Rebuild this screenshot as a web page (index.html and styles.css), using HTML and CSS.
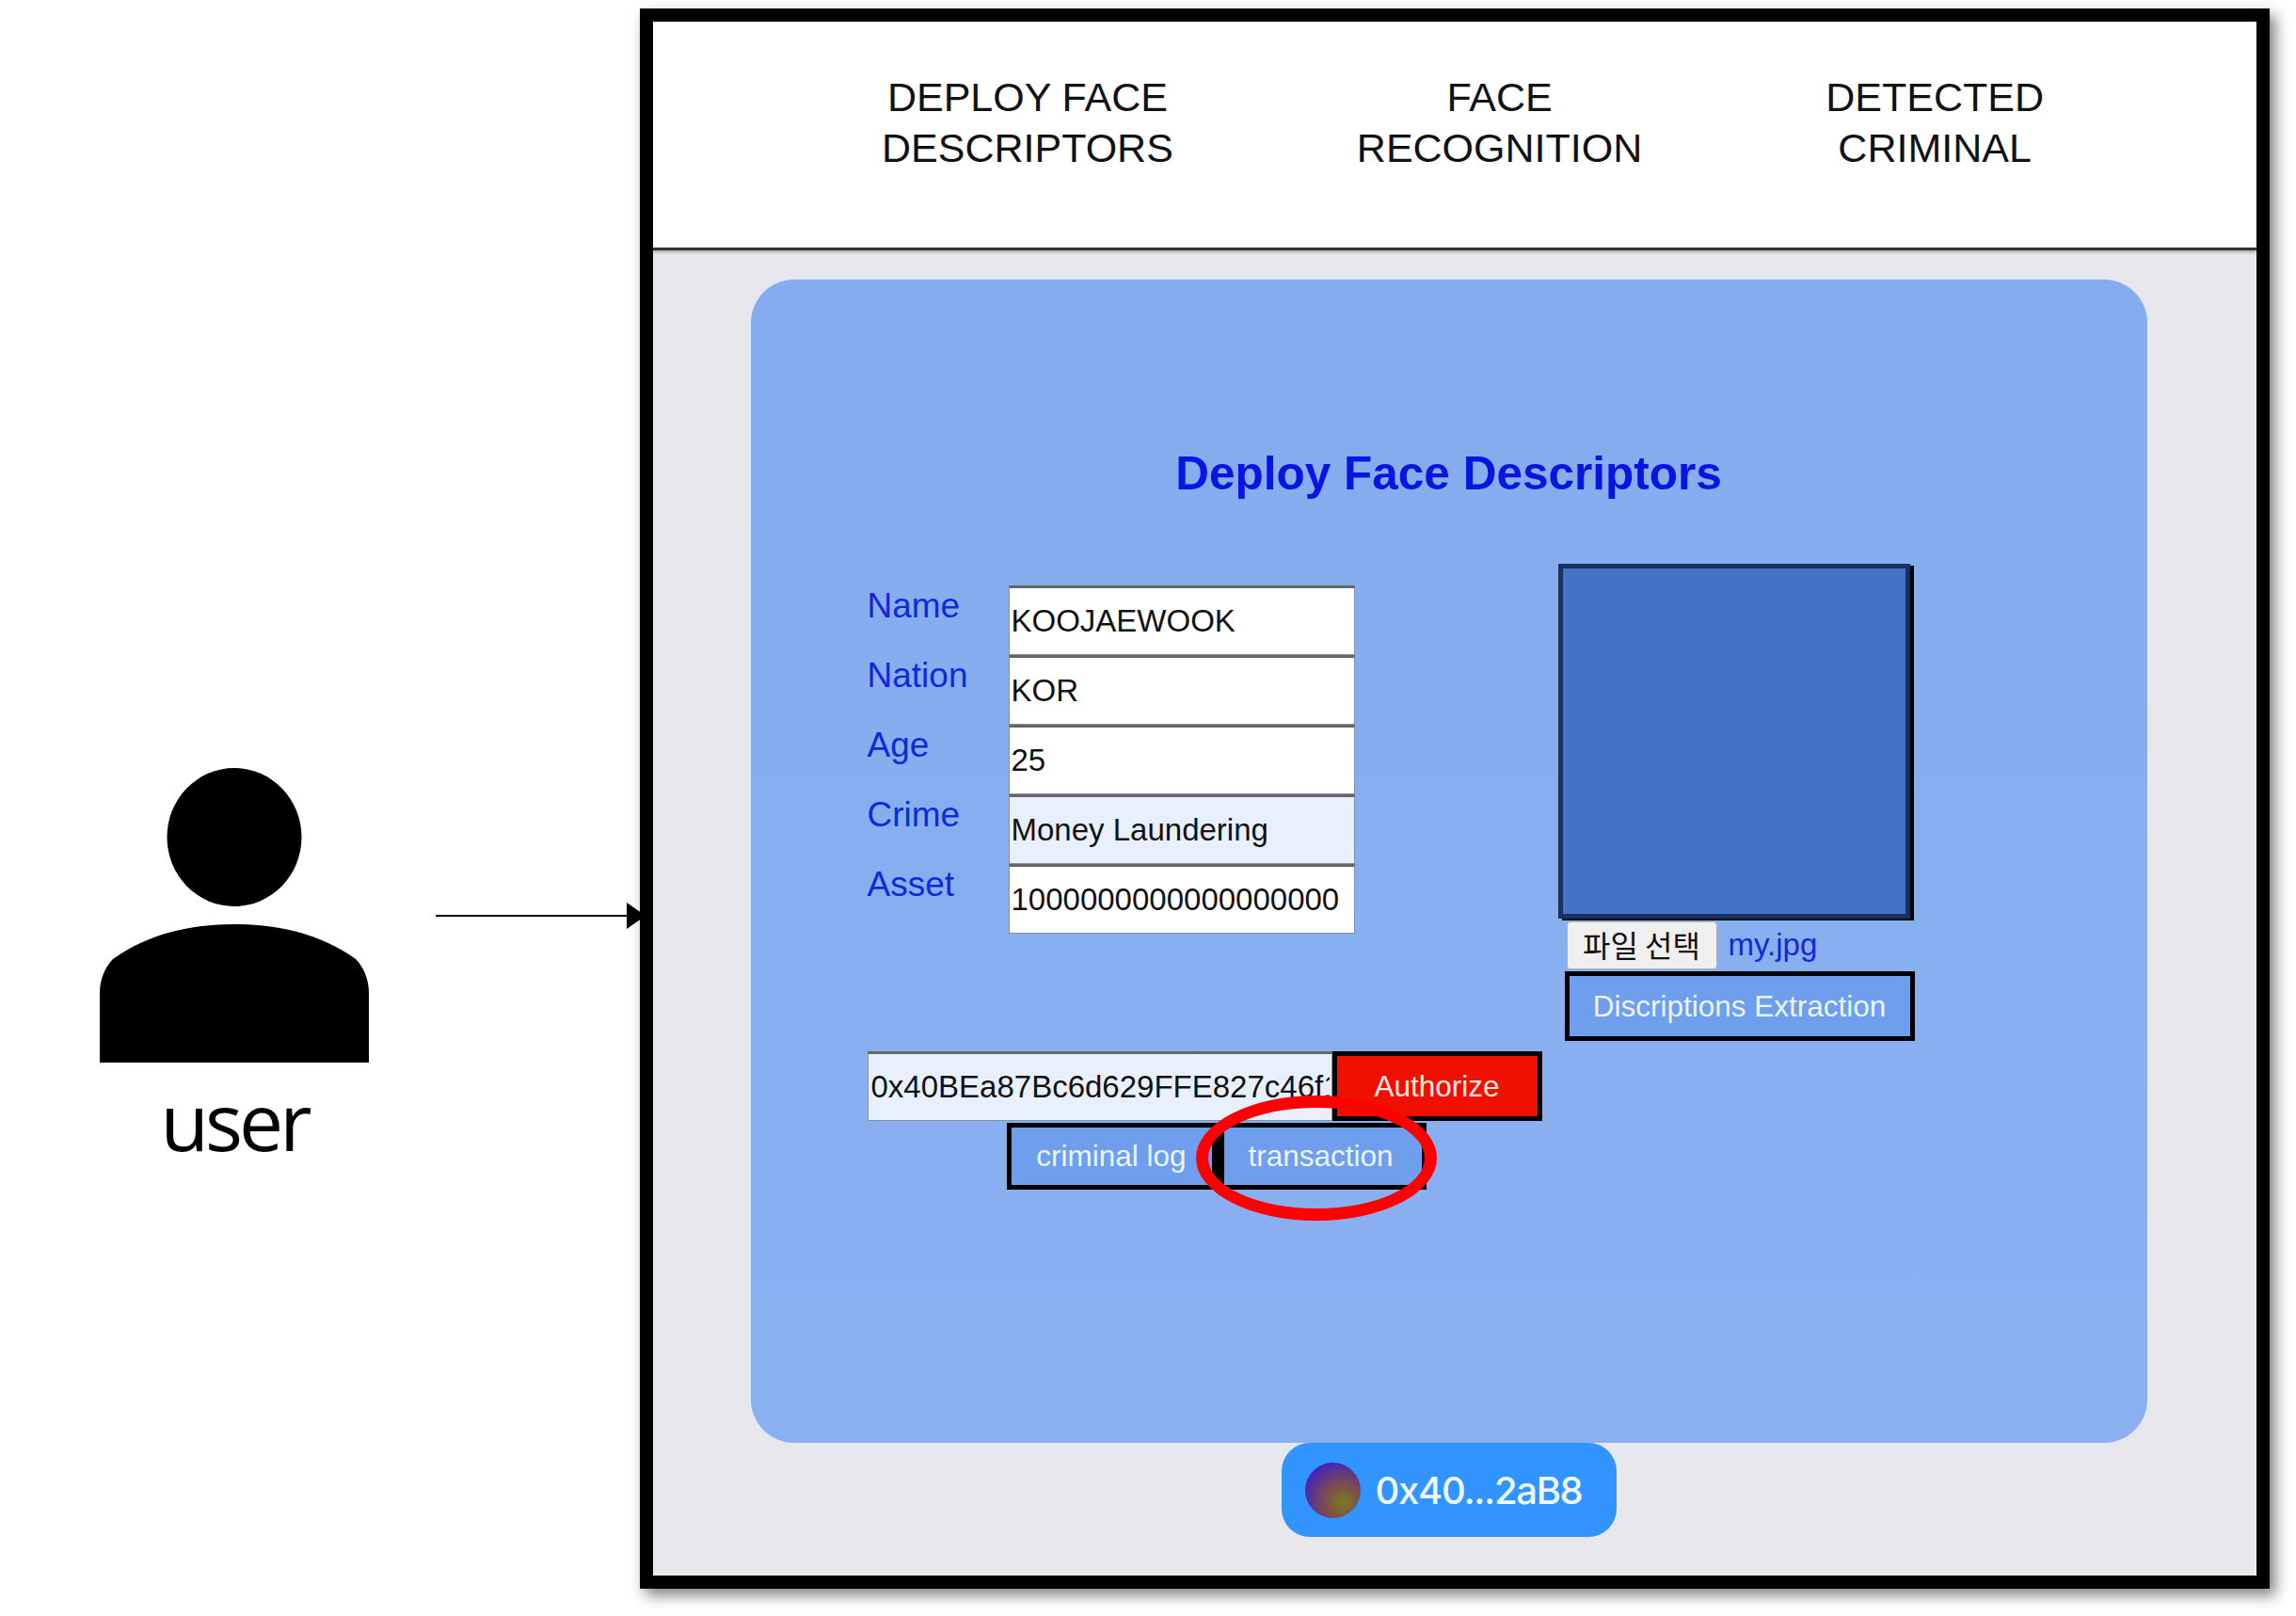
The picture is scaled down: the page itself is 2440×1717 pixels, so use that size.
FILE: index.html
```html
<!DOCTYPE html>
<html lang="en">
<head>
    <meta charset="UTF-8">
    <title>Deploy Face Descriptors</title>
    <link rel="stylesheet" href="styles.css">
</head>
<body>
    <div class="slide">
        <div class="user-node">
            <svg class="user-icon" width="286" height="313" viewBox="0 0 286 313">
                <ellipse cx="143" cy="73.5" rx="71.5" ry="73.5"/>
                <path d="M0 313V239C0 224 6 211 14 203C50 177 95 166 143 166C191 166 236 177 272 203C280 211 286 224 286 239V313Z"/>
            </svg>
            <div class="user-label">user</div>
        </div>
        <div class="arrow"></div>
        <div class="browser">
            <nav class="top-nav">
                <a class="nav-item">DEPLOY FACE<br>DESCRIPTORS</a>
                <a class="nav-item">FACE<br>RECOGNITION</a>
                <a class="nav-item">DETECTED<br>CRIMINAL</a>
            </nav>
            <main class="content">
                <section class="panel">
                    <h1 class="panel-title">Deploy Face Descriptors</h1>
                    <div class="panel-body">
                        <div class="form-side">
                            <div class="fields">
                                <div class="labels">
                                    <label>Name</label>
                                    <label>Nation</label>
                                    <label>Age</label>
                                    <label>Crime</label>
                                    <label>Asset</label>
                                </div>
                                <div class="inputs">
                                    <input class="field" type="text" value="KOOJAEWOOK">
                                    <input class="field" type="text" value="KOR">
                                    <input class="field" type="text" value="25">
                                    <input class="field autofilled" type="text" value="Money Laundering">
                                    <input class="field" type="text" value="1000000000000000000">
                                </div>
                            </div>
                            <div class="auth-row">
                                <input class="field address autofilled" type="text" value="0x40BEa87Bc6d629FFE827c46f12aB8">
                                <button class="btn btn-red">Authorize</button>
                            </div>
                            <div class="action-row">
                                <button class="btn action">criminal log</button>
                                <button class="btn action">transaction</button>
                            </div>
                        </div>
                        <div class="photo-side">
                            <div class="photo"></div>
                            <div class="file-row">
                                <button class="file-btn">파일 선택</button>
                                <span class="file-name">my.jpg</span>
                            </div>
                            <button class="btn extract">Discriptions Extraction</button>
                        </div>
                    </div>
                </section>
                <div class="wallet">
                    <span class="wallet-avatar"></span>
                    <span>0x40...2aB8</span>
                </div>
            </main>
        </div>
        <div class="highlight"></div>
    </div>
</body>
</html>
```

FILE: styles.css
```css
body {
    margin: 0;
    background-color: #fff;
    font-family: "Liberation Sans", Arial, sans-serif;
}
.slide {
    position: relative;
    width: 2440px;
    height: 1717px;
    display: flex;
    align-items: flex-start;
    overflow: hidden;
}

/* left side of the diagram */
.user-node {
    width: 286px;
    margin: 816px 0 0 106px;
    display: flex;
    flex-direction: column;
    align-items: center;
}
.user-icon {
    display: block;
    fill: #000;
}
.user-label {
    margin-top: 7px;
    font-family: "Open Sans", sans-serif;
    font-size: 84px;
    font-weight: 400;
    line-height: 110px;
    letter-spacing: -4px;
    color: #000;
}
.arrow {
    position: relative;
    width: 217px;
    height: 2px;
    margin: 972px 0 0 71px;
    background-color: #000;
}
.arrow::after {
    content: "";
    position: absolute;
    right: -6px;
    top: -13px;
    border-left: 20px solid #000;
    border-top: 14px solid transparent;
    border-bottom: 14px solid transparent;
}

/* browser window */
.browser {
    box-sizing: border-box;
    width: 1732px;
    height: 1679px;
    margin-top: 9px;
    border: 14px solid #000;
    background-color: #e8e7eb;
    box-shadow: 6px 7px 14px rgba(0, 0, 0, 0.5);
    display: flex;
    flex-direction: column;
}
.top-nav {
    height: 243px;
    flex-shrink: 0;
    box-sizing: border-box;
    padding: 53px 0 0 243px;
    display: flex;
    gap: 195px;
    background-color: #fff;
    border-bottom: 3px solid #333;
    box-shadow: 0 2px 3px rgba(0, 0, 0, 0.3);
}
.nav-item {
    font-size: 43px;
    line-height: 54px;
    color: #111;
    text-align: center;
}
.content {
    display: flex;
    flex-direction: column;
    align-items: center;
    padding-top: 31px;
    margin-left: -13px;
}
.panel {
    box-sizing: border-box;
    width: 1484px;
    height: 1236px;
    padding: 176px 0 0 124px;
    border-radius: 46px;
    background: linear-gradient(#84acee, #8ab0f0);
    box-shadow: 0 0 6px #dbe8fb;
}
.panel-title {
    margin: 0 0 0 -124px;
    font-size: 49.5px;
    line-height: 60px;
    font-weight: 700;
    color: #0a14e0;
    text-align: center;
}
.panel-body {
    display: flex;
    margin-top: 73px;
}
.form-side {
    width: 734px;
}
.fields {
    display: flex;
    height: 511px;
}
.labels {
    width: 150px;
    padding-top: 1px;
    display: flex;
    flex-direction: column;
}
.labels label {
    font-size: 37px;
    line-height: 74px;
    color: #1228dc;
}
.inputs {
    display: flex;
    flex-direction: column;
    padding-top: 16px;
}
.field {
    box-sizing: border-box;
    width: 368px;
    height: 74px;
    padding: 0 2px;
    border: 1px solid #8a8f99;
    border-top: 3px solid #666;
    border-radius: 0;
    outline: none;
    background-color: #fff;
    font-family: "Liberation Sans", Arial, sans-serif;
    font-size: 33px;
    color: #111;
}
.field.autofilled {
    background-color: #e8f0fe;
}
.auth-row {
    display: flex;
}
.field.address {
    width: 494px;
    padding-left: 3px;
}
.btn {
    box-sizing: border-box;
    border: 5px solid #000;
    background-color: #6f9eec;
    color: #e9f5ff;
    font-family: "Liberation Sans", Arial, sans-serif;
    font-size: 31.5px;
    padding: 0;
}
.btn-red {
    width: 223px;
    height: 74px;
    background-color: #f01000;
    color: #ffe9e2;
}
.action-row {
    display: flex;
    margin: 2px 0 0 148px;
}
.action {
    width: 223px;
    height: 71px;
}
.action + .action {
    border-left-width: 8px;
    padding-right: 4px;
}
.photo-side {
    display: flex;
    flex-direction: column;
    width: 380px;
    margin-top: -7px;
}
.photo {
    box-sizing: border-box;
    width: 374px;
    height: 377px;
    border: 5px solid #1a3060;
    background-color: #4472c4;
    box-shadow: 4px 2px 0 #000;
}
.file-row {
    display: flex;
    align-items: center;
    margin: 3px 0 2px 9px;
}
.file-btn {
    box-sizing: border-box;
    width: 160px;
    height: 51px;
    padding: 0 0 4px;
    border: 1px solid #b0b0b0;
    border-radius: 4px;
    background-color: #efefef;
    color: #111;
    font-family: "Noto Sans CJK KR", sans-serif;
    font-size: 32px;
}
.file-name {
    margin: 0 0 2px 12px;
    font-size: 33px;
    color: #1228dc;
}
.extract {
    width: 372px;
    height: 74px;
    margin-left: 7px;
}

/* wallet pill under the panel */
.wallet {
    box-sizing: border-box;
    width: 356px;
    height: 100px;
    padding-left: 25px;
    display: flex;
    align-items: center;
    gap: 16px;
    border-radius: 30px;
    background-color: #3194ff;
    color: #eef8ff;
    font-family: Inter, sans-serif;
    font-size: 40px;
    font-weight: 500;
    letter-spacing: -1.3px;
}
.wallet-avatar {
    width: 59px;
    height: 59px;
    border-radius: 50%;
    background: radial-gradient(circle at 68% 72%, #7e7a20 0, #7b4a50 35%, #4224c4 78%);
}

/* red marker drawn over the screenshot */
.highlight {
    position: absolute;
    left: 1271px;
    top: 1164px;
    width: 256px;
    height: 133px;
    box-sizing: border-box;
    border: 13px solid #f00;
    border-radius: 50%;
}
```
